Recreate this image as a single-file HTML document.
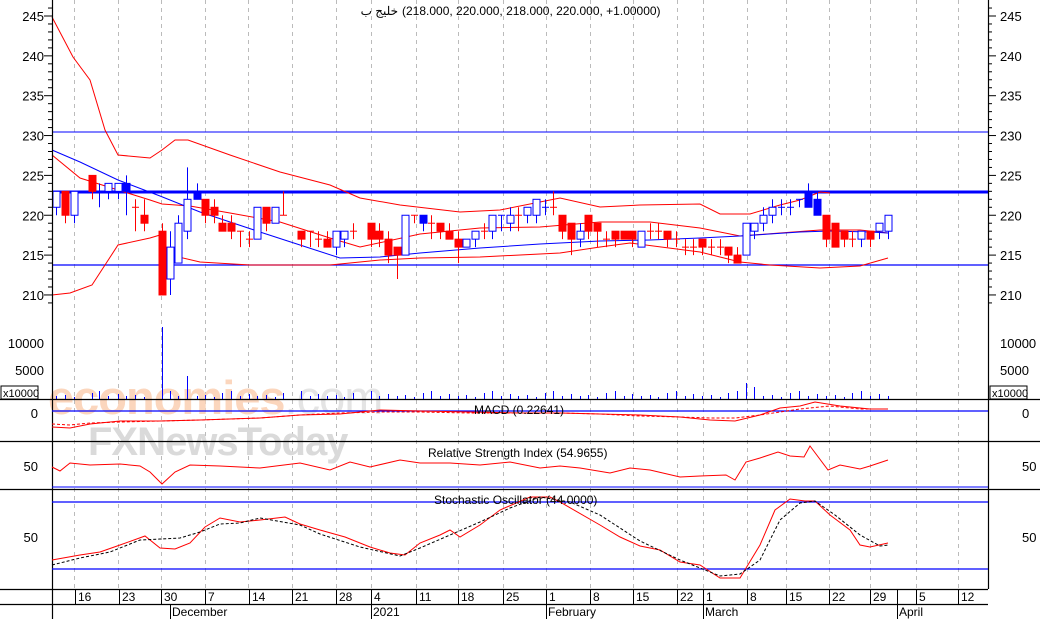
<!DOCTYPE html>
<html><head><meta charset="utf-8"><style>
html,body{margin:0;padding:0;background:#fff;width:1040px;height:619px;overflow:hidden}
svg{display:block;font-family:"Liberation Sans","Noto Sans CJK SC",sans-serif}
</style></head><body>
<svg id="s" width="1040" height="619" viewBox="0 0 1040 619" xmlns="http://www.w3.org/2000/svg">
<rect width="1040" height="619" fill="#fff"/>
<g id="grid" stroke="#bbb" stroke-dasharray="4,4" stroke-width="1"></g>
<text x="48" y="414" font-size="47" fill="#fbd6bd" font-weight="bold" letter-spacing="-1">economies<tspan fill="#e4e4e4" font-weight="normal">.com</tspan></text>
<text x="88" y="455" font-size="40" fill="#dadada" font-weight="bold" letter-spacing="-1">FXNewsToday</text>
<line x1="52" y1="132" x2="988" y2="132" stroke="#00f" stroke-width="1"/>
<line x1="52" y1="192" x2="988" y2="192" stroke="#00f" stroke-width="3"/>
<line x1="52" y1="265" x2="988" y2="265" stroke="#00f" stroke-width="1.2"/>
<g fill="none" stroke="#f00" stroke-width="1">
<polyline points="52,17 73,57 90,80 105,130 118,155 150,158 162,150 175,140 188,140 230,155 280,172 330,185 360,198 400,205 460,212 500,210 560,198 600,207 640,205 700,204 720,214 750,214 780,205 800,200 820,192 830,193"/>
<polyline points="52,295 70,293 92,285 118,245 150,238 160,235 170,255 200,262 250,265 330,265 380,260 420,258 480,257 560,253 600,247 630,243 700,252 740,262 770,265 820,268 860,266 888,258"/>
<polyline points="52,155 80,178 118,190 150,200 162,204 190,206 230,213 280,222 330,238 360,247 420,234 480,228 540,227 600,222 650,222 700,228 740,236 780,233 820,230 860,230 888,233"/>
</g>
<polyline fill="none" stroke="#00f" stroke-width="1" points="52,150 80,162 118,180 160,196 200,212 260,232 300,245 340,258 380,257 420,253 480,248 540,244 600,241 650,240 700,238 740,236 800,232 830,231 870,232 888,233"/>
<g id="candles"></g>
<g id="vol" stroke="#00f" stroke-width="1"></g>
<text x="398" y="15" font-size="12" fill="#000" text-anchor="end">خليج ب</text>
<text x="402" y="15" font-size="12" fill="#000">(218.000, 220.000, 218.000, 220.000, +1.00000)</text>
<g stroke="#000" stroke-width="1.2">
<line x1="0" y1="399.5" x2="1040" y2="399.5"/>
<line x1="0" y1="441.5" x2="1040" y2="441.5"/>
<line x1="0" y1="489.5" x2="1040" y2="489.5"/>
<line x1="0" y1="589.5" x2="988" y2="589.5"/>
<line x1="0" y1="604.5" x2="988" y2="604.5"/>
<line x1="52.5" y1="0" x2="52.5" y2="619"/>
<line x1="988.5" y1="0" x2="988.5" y2="589"/>
</g>
<line x1="52" y1="411" x2="988" y2="411" stroke="#00f" stroke-width="1.2"/>
<polyline fill="none" stroke="#f00" points="52,427 70,428 90,424 120,421 160,421 200,420 260,418 300,415 340,414 380,410 420,411 470,412 520,413 560,413 600,414 640,415 680,417 710,420 735,421 760,415 780,408 800,406 815,402 840,406 870,409 888,409"/>
<polyline fill="none" stroke="#f00" stroke-dasharray="3,2" points="52,424 70,425 90,423 120,422 160,421 200,420 260,418 300,415 340,413 380,412 420,412 470,413 520,413 560,413 600,414 640,416 680,417 710,418 735,418 760,415 780,412 800,409 830,406 860,409 888,409"/>
<text x="474" y="414" font-size="12" fill="#000">MACD (0.22641)</text>
<line x1="52" y1="487" x2="988" y2="487" stroke="#00f" stroke-width="1"/>
<polyline fill="none" stroke="#f00" points="52,467 60,471 70,463 90,465 120,464 140,466 150,472 162,484 175,472 190,465 220,466 260,468 300,463 330,470 350,462 370,467 400,460 420,463 450,463 480,465 510,462 540,468 560,466 580,468 610,473 630,468 650,470 680,477 700,476 726,475 735,480 746,462 760,458 778,452 790,456 804,457 810,446 828,470 840,465 860,469 870,466 888,460"/>
<text x="428" y="457" font-size="12" fill="#000">Relative Strength Index (54.9655)</text>
<line x1="52" y1="502" x2="988" y2="502" stroke="#00f" stroke-width="1.2"/>
<line x1="52" y1="569" x2="988" y2="569" stroke="#00f" stroke-width="1.2"/>
<polyline fill="none" stroke="#f00" points="52,560 80,555 100,552 120,545 145,536 160,548 175,549 190,543 205,527 220,518 240,522 260,520 285,517 300,524 320,530 345,537 370,547 390,553 405,555 420,543 440,535 450,530 460,537 480,525 500,510 530,497 550,497 560,502 600,525 620,537 640,546 660,550 680,562 700,565 720,578 740,578 760,545 775,510 790,499 805,501 815,501 830,515 850,530 860,545 870,547 888,543"/>
<polyline fill="none" stroke="#000" stroke-dasharray="3,2" points="52,565 80,558 110,552 140,540 160,539 180,538 200,532 220,524 240,523 260,518 300,525 320,534 360,547 400,556 420,548 450,535 480,522 510,508 540,497 570,502 600,515 640,541 680,560 720,576 740,574 760,560 780,520 800,503 815,501 835,515 860,535 880,546 888,545"/>
<text x="434" y="504" font-size="12" fill="#000">Stochastic Oscillator (44.0000)</text>
<g id="ax" font-size="13" fill="#000"></g>
<rect x="1" y="386" width="37" height="13" fill="#fff" stroke="#000"/>
<text x="3" y="397" font-size="11">x10000</text>
<rect x="990" y="386" width="37" height="13" fill="#fff" stroke="#000"/>
<text x="992" y="397" font-size="11">x10000</text>
</svg>
<script>
var NS="http://www.w3.org/2000/svg";
function el(p,t,a,txt){var e=document.createElementNS(NS,t);for(var k in a)e.setAttribute(k,a[k]);if(txt!=null)e.textContent=txt;p.appendChild(e);return e;}
var g=document.getElementById('grid');
var gx=[74,118,161,205,248,292,336,371,416,458,503,546,590,633,677,703,747,786,829,870,916,958];
gx.forEach(function(x){el(g,'line',{x1:x+.5,y1:0,x2:x+.5,y2:589});});
var ax=document.getElementById('ax');
var dl=[[75,"16"],[119,"23"],[161,"30"],[205,"7"],[249,"14"],[292,"21"],[336,"28"],[371,"4"],[416,"11"],[458,"18"],[503,"25"],[546,"1"],[590,"8"],[633,"15"],[677,"22"],[703,"1"],[747,"8"],[786,"15"],[829,"22"],[870,"29"],[897,""],[916,"5"],[958,"12"]];
dl.forEach(function(d){el(ax,'line',{x1:d[0]+.5,y1:589,x2:d[0]+.5,y2:604,stroke:'#000'});if(d[1])el(ax,'text',{x:d[0]+3,y:601,'font-size':12},d[1]);});
[[170,"December"],[371,"2021"],[546,"February"],[703,"March"],[897,"April"]].forEach(function(d){el(ax,'line',{x1:d[0]+.5,y1:604,x2:d[0]+.5,y2:619,stroke:'#000'});el(ax,'text',{x:d[0]+2,y:616,'font-size':12},d[1]);});
function py(p){return 16+(245-p)*7.97;}
[245,240,235,230,225,220,215,210].forEach(function(p){var y=py(p);el(ax,'text',{x:44,y:y+5,'text-anchor':'end'},String(p));el(ax,'text',{x:1000,y:y+5},String(p));});
for(var p=209;p<=246;p++){var y=py(p),l=(p%5==0)?8:4;el(ax,'line',{x1:52-l,y1:y,x2:52,y2:y,stroke:'#000'});el(ax,'line',{x1:988,y1:y,x2:988+l,y2:y,stroke:'#000'});}
[[10000,343],[5000,370]].forEach(function(d){el(ax,'text',{x:44,y:d[1]+5,'text-anchor':'end'},String(d[0]));el(ax,'text',{x:1000,y:d[1]+5},String(d[0]));});
[[0,413],[50,466],[50,537]].forEach(function(d){el(ax,'text',{x:38,y:d[1]+5,'text-anchor':'end'},String(d[0]));el(ax,'text',{x:1022,y:d[1]+5},String(d[0]));});
var C=[[56,221,223,223,220],[65,223,220,223,219],[74,220,223,223,219],[92,225,223,225,222],[99,223,223,224,221],[108,223,224,224,222],[118,223,224,224,222],[126,224,223,225,220],[135,221,221,222,218],[144,220,219,222,218],[162,218,210,219,210],[170,212,216,218,210],[178,214,219,220,214],[187,218,222,226,217],[197,222,223,224,222],[205,222,220,222,219],[214,221,220,222,219],[222,219,218,220,218],[231,219,218,220,217],[240,218,218,218,216],[249,217,217,218,216],[257,217,221,221,217],[266,221,219,221,218],[275,219,221,221,219],[283,220,220,223,220],[301,218,217,218,216],[310,218,218,218,216],[318,217,217,218,216],[327,217,216,218,216],[336,216,218,218,215],[344,217,218,218,216],[353,218,218,219,217],[371,219,217,219,216],[379,218,217,219,216],[388,217,215,218,214],[397,216,215,216,212],[405,215,220,220,215],[414,220,220,220,219],[423,220,219,220,218],[431,219,219,220,217],[440,219,218,219,217],[449,218,217,219,217],[458,217,216,218,214],[466,216,217,217,216],[475,217,218,218,216],[484,218,218,219,217],[492,218,220,220,217],[501,220,220,220,218],[510,219,220,221,218],[518,220,220,221,218],[527,220,221,221,219],[536,220,222,222,219],[545,221,221,222,220],[553,221,221,223,220],[562,220,218,220,217],[571,219,217,219,215],[580,217,218,219,216],[588,220,218,220,217],[597,219,218,219,216],[606,217,217,218,216],[615,218,217,218,216],[624,218,217,218,217],[632,218,217,218,216],[641,216,218,218,216],[650,218,218,219,217],[658,218,218,219,217],[667,218,217,218,216],[676,217,217,218,216],[685,216,216,217,215],[693,216,216,217,215],[702,217,216,217,215],[711,216,216,217,215],[720,216,216,217,215],[728,216,215,216,214],[737,215,214,216,214],[746,215,219,219,215],[754,218,219,219,217],[763,219,220,221,218],[772,220,221,222,219],[781,221,221,222,220],[790,221,221,222,220],[799,222,222,222,221],[808,221,223,224,221],[817,222,220,223,220],[826,220,217,220,216],[835,219,216,219,216],[844,218,217,218,216],[852,217,217,218,216],[861,217,218,218,216],[870,218,217,218,216],[879,218,219,219,217],[888,218,220,220,217]];
var filledBlue={126:1,197:1,423:1,501:1,545:1,808:1,817:1};
var cg=document.getElementById('candles');
C.forEach(function(c,i){var x=c[0],up=c[2]>c[1],dn=c[2]<c[1];var col=dn?'#f00':(up?'#00f':'#f00');
if(x>740&&x<830&&!dn)col='#00f'; if(x<130&&x>85&&!dn)col='#00f';
if(filledBlue[x]){col='#00f';}
el(cg,'line',{x1:x+.5,y1:py(c[3]),x2:x+.5,y2:py(c[4]),stroke:col});
var t=py(Math.max(c[1],c[2])),b=py(Math.min(c[1],c[2]));if(b-t<1){el(cg,'line',{x1:x-3,y1:t,x2:x+4,y2:t,stroke:col});}
else el(cg,'rect',{x:x-3,y:t,width:7,height:b-t,fill:(dn||filledBlue[x])?col:'#fff',stroke:col});});
var vg=document.getElementById('vol');
C.forEach(function(c,i){var h=[3,4,2,6,8,3,5][i%7];if(c[0]==162)h=72;if(c[0]==187)h=23;if(c[0]==703)h=18;if(c[0]==746)h=16;if(c[0]==754)h=12;el(vg,'line',{x1:c[0]+.5,y1:399,x2:c[0]+.5,y2:399-h});});
</script>
</body></html>
